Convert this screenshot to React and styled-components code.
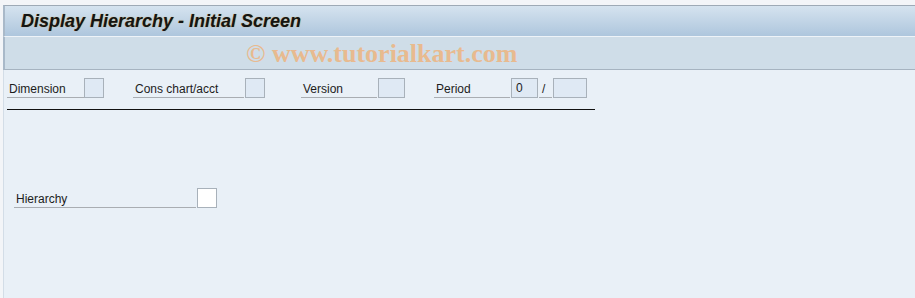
import React from "react";
import styled, { createGlobalStyle } from "styled-components";

const Global = createGlobalStyle`
  html, body { margin: 0; padding: 0; background: #f3f5f8; }
  body { font-family: "Liberation Sans", Arial, sans-serif; }
`;

const Screen = styled.div`
  width: 915px;
  height: 298px;
  padding-top: 5px;
  box-sizing: border-box;
  background: #f3f5f8;
  overflow: hidden;
`;

const Window = styled.div`
  margin-left: 3px;
  display: flex;
  flex-direction: column;
  height: 293px;
`;

const TitleBar = styled.div`
  height: 30px;
  border-top: 1px solid #9eaab6;
  border-bottom: 1px solid #eef3f8;
  border-left: 2px solid #a9b9c9;
  background: linear-gradient(#d5e3ef, #aec6dd);
  display: flex;
  align-items: center;
  padding-left: 16px;
`;

const Title = styled.h1`
  margin: 0;
  font-family: "Liberation Sans", Arial, sans-serif;
  font-size: 18px;
  font-weight: bold;
  font-style: italic;
  color: #141414;
  text-shadow: 0 0 1px #c9a24a;
`;

const Toolbar = styled.div`
  height: 32px;
  background: #cfdde8;
  border-left: 2px solid #a9b9c9;
  border-bottom: 1px solid #a6b3c0;
  display: flex;
  align-items: center;
  padding-left: 241px;
`;

const Watermark = styled.span`
  font-family: "Liberation Serif", "Times New Roman", serif;
  font-weight: bold;
  font-size: 26px;
  color: #e8ba8f;
  padding-top: 2px;
`;

const Body = styled.div`
  flex: 1;
  background: #e9f0f7;
  border-left: 1px solid #d3dde7;
  padding: 8px 0 0 3px;
  display: flex;
  flex-direction: column;
`;

const Row = styled.div`
  display: flex;
  align-items: flex-start;
  height: 20px;
  margin-left: ${(p) => p.$indent || 0}px;
  margin-top: ${(p) => p.$top || 0}px;
`;

const Field = styled.div`
  display: flex;
  margin-right: ${(p) => p.$gap || 0}px;
`;

const Label = styled.div`
  width: ${(p) => p.$w}px;
  height: 20px;
  box-sizing: border-box;
  border-bottom: 1px solid #a9adb2;
  font-size: 12px;
  color: #1c1c1c;
  padding: 3px 0 0 2px;
  display: flex;
  align-items: center;
`;

const Input = styled.div`
  width: ${(p) => p.$w}px;
  height: 20px;
  box-sizing: border-box;
  margin-left: ${(p) => p.$ml ?? 1}px;
  border: 1px solid #a8b1ba;
  background: ${(p) => (p.$white ? "#ffffff" : "#dfe9f4")};
  font-size: 12px;
  color: #1c1c1c;
  padding-left: 4px;
  display: flex;
  align-items: center;
`;

const Sep = styled.div`
  width: 13px;
  height: 20px;
  margin-left: 1px;
  box-sizing: border-box;
  border-bottom: 1px solid #a9adb2;
  font-size: 12px;
  color: #1c1c1c;
  padding: 2px 0 0 3px;
  display: flex;
  align-items: center;
`;

const Divider = styled.div`
  width: 588px;
  height: 1px;
  background: #111;
  margin-top: 11px;
`;

export default function App() {
  return (
    <>
      <Global />
      <Screen>
        <Window>
          <TitleBar>
            <Title>Display Hierarchy - Initial Screen</Title>
          </TitleBar>
          <Toolbar>
            <Watermark>© www.tutorialkart.com</Watermark>
          </Toolbar>
          <Body>
            <Row>
              <Field $gap={29}>
                <Label $w={77}>Dimension</Label>
                <Input $w={20} $ml={0} />
              </Field>
              <Field $gap={36}>
                <Label $w={111}>Cons chart/acct</Label>
                <Input $w={20} />
              </Field>
              <Field $gap={29}>
                <Label $w={76}>Version</Label>
                <Input $w={27} />
              </Field>
              <Field>
                <Label $w={76}>Period</Label>
                <Input $w={27}>0</Input>
                <Sep>/</Sep>
                <Input $w={34} />
              </Field>
            </Row>
            <Divider />
            <Row $indent={7} $top={78}>
              <Field>
                <Label $w={182}>Hierarchy</Label>
                <Input $w={20} $white />
              </Field>
            </Row>
          </Body>
        </Window>
      </Screen>
    </>
  );
}
